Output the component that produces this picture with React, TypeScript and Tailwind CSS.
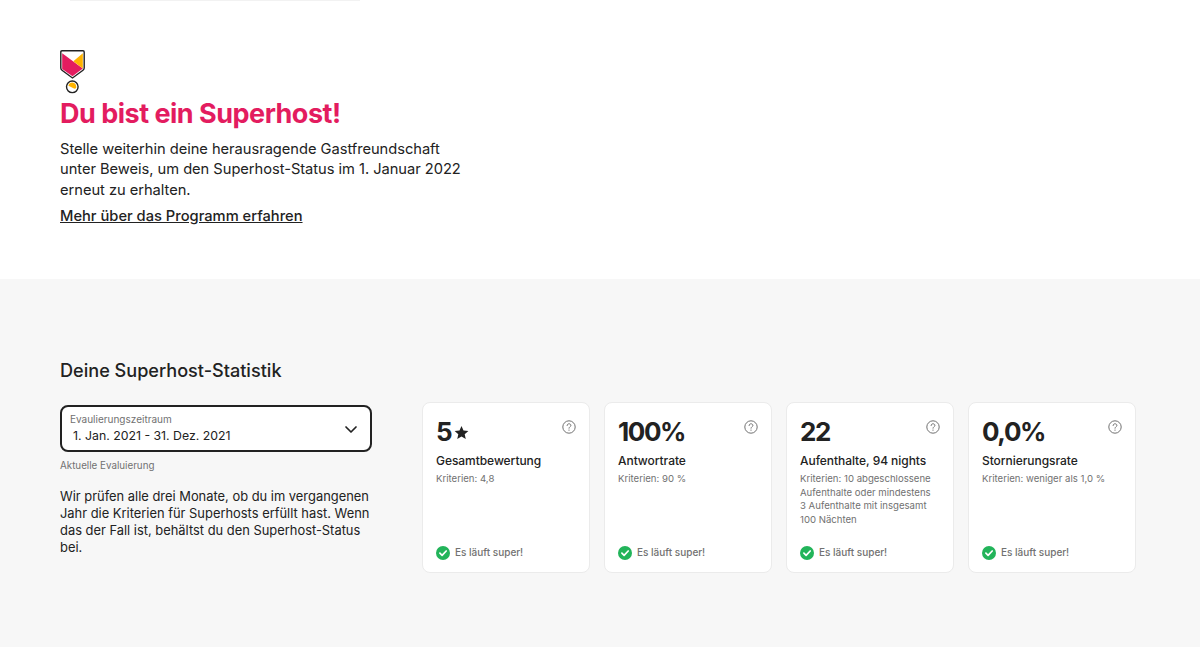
import React from "react";

function Medal() {
  return (
    <svg width="26" height="44" viewBox="0 0 26 44" className="block">
      <path d="M0.8 2 Q0.8 0.8 2 0.8 L23 0.8 Q24.2 0.8 24.2 2 L24.2 18 Q24.2 19.4 23 20.2 L12.5 28 L2 20.2 Q0.8 19.4 0.8 18 Z" fill="#fff" stroke="#222" strokeWidth="1.4" />
      <path d="M2.2 3.2 L22.8 18.4 L12.5 26.3 L2.2 19 Z" fill="#E31C5F" />
      <path d="M22.8 3.2 L13.3 11.2 L22.8 18.4 Z" fill="#FFB400" />
      <circle cx="12.3" cy="36.8" r="5.8" fill="#fff" stroke="#222" strokeWidth="1.4" />
      <path d="M8.4 35.8 Q9.2 32.6 12.3 32.6 Q16.6 33.2 16.3 37.8 Q15 39.3 13.5 38.3 Z" fill="#FFB400" />
    </svg>
  );
}

function Help() {
  return (
    <svg width="14" height="14" viewBox="0 0 14 14" fill="none" className="block">
      <circle cx="7" cy="7" r="6.2" stroke="#717171" strokeWidth="1" />
      <path d="M5.1 5.5 C5.1 4.4 6 3.8 7 3.8 C8 3.8 8.9 4.4 8.9 5.4 C8.9 6.7 7 6.8 7 8.2" stroke="#717171" strokeWidth="1" strokeLinecap="round" />
      <circle cx="7" cy="10.1" r="0.7" fill="#717171" />
    </svg>
  );
}

function Check() {
  return (
    <svg width="14" height="14" viewBox="0 0 14 14" className="block shrink-0">
      <circle cx="7" cy="7" r="7" fill="#22B45A" />
      <path d="M3.9 7.2 L6.1 9.3 L10.2 5" fill="none" stroke="#fff" strokeWidth="1.7" strokeLinecap="round" strokeLinejoin="round" />
    </svg>
  );
}

function Star() {
  return (
    <svg width="15" height="15" viewBox="0 0 24 24" className="block" fill="#222">
      <path d="M12 1.5l3.2 7.2 7.8.8-5.9 5.2 1.7 7.7L12 18.4l-6.8 4 1.7-7.7L1 9.5l7.8-.8z" />
    </svg>
  );
}

function Card({ value, star, title, desc }: { value: string; star?: boolean; title: string; desc: string }) {
  return (
    <div className="w-[168px] h-[171px] bg-white rounded-lg border border-[#ebebeb] px-[13px] pt-[11px] pb-[12px] flex flex-col">
      <div className="flex items-start justify-between">
        <div className="flex items-center gap-[3px] h-[34px] text-[26px] font-bold tracking-[-1.4px] text-[#222]">
          {value}
          {star && <span className="mt-[3px]"><Star /></span>}
        </div>
        <span className="mt-[6px]"><Help /></span>
      </div>
      <div className="mt-[5px] text-[12px] leading-[16px] font-medium tracking-[-0.05px] text-[#222]">{title}</div>
      <div className="mt-[3px] pr-[4px] text-[9.6px] leading-[13.5px] text-[#717171]">{desc}</div>
      <div className="mt-auto flex items-center gap-[5px] text-[10px] font-medium text-[#717171]">
        <Check />
        Es läuft super!
      </div>
    </div>
  );
}

export default function App() {
  return (
    <div className="w-[1200px] h-[647px] overflow-hidden bg-white flex flex-col font-['Inter','Liberation_Sans',sans-serif] text-[#222]">
      <div className="h-[279px] shrink-0 pl-[60px]">
        <div className="ml-[10px] w-[290px] h-px bg-[#f2f2f2]" />
        <div className="pt-[49px]"><Medal /></div>
        <h1 className="mt-[3px] text-[27px] leading-[34px] font-bold tracking-[-0.5px] text-[#E31C5F]">Du bist ein Superhost!</h1>
        <p className="mt-[8px] w-[410px] text-[14.7px] leading-[20.25px] tracking-[-0.04px]">
          Stelle weiterhin deine herausragende Gastfreundschaft unter Beweis, um den Superhost-Status im 1. Januar 2022 erneut zu erhalten.
        </p>
        <a className="block mt-[6px] text-[14.7px] leading-[20px] font-medium underline">Mehr über das Programm erfahren</a>
      </div>
      <div className="flex-1 bg-[#f7f7f7] pl-[60px] pt-[79px]">
        <h2 className="text-[18.1px] leading-[24px] font-medium">Deine Superhost-Statistik</h2>
        <div className="mt-[20px] flex">
          <div className="w-[312px] mt-[3px]">
            <div className="h-[47px] bg-white border-2 border-[#222] rounded-lg pl-[8px] pr-[12px] flex items-center justify-between">
              <div>
                <div className="text-[10px] leading-[13px] text-[#717171]">Evaulierungszeitraum</div>
                <div className="pl-[3px] mt-[1px] text-[12.3px] leading-[17px]">1. Jan. 2021 - 31. Dez. 2021</div>
              </div>
              <svg width="14" height="14" viewBox="0 0 14 14" fill="none" className="block">
                <path d="M2 5 L7 10 L12 5" stroke="#222" strokeWidth="1.7" strokeLinecap="round" strokeLinejoin="round" />
              </svg>
            </div>
            <div className="mt-[7px] text-[9.8px] leading-[13px] text-[#717171]">Aktuelle Evaluierung</div>
            <p className="mt-[16px] text-[12.9px] leading-[17px]">
              Wir prüfen alle drei Monate, ob du im vergangenen Jahr die Kriterien für Superhosts erfüllt hast. Wenn das der Fall ist, behältst du den Superhost-Status bei.
            </p>
          </div>
          <div className="ml-[50px] flex gap-[14px]">
            <Card value="5" star title="Gesamtbewertung" desc="Kriterien: 4,8" />
            <Card value="100%" title="Antwortrate" desc="Kriterien: 90 %" />
            <Card value="22" title="Aufenthalte, 94 nights" desc="Kriterien: 10 abgeschlossene Aufenthalte oder mindestens 3 Aufenthalte mit insgesamt 100 Nächten" />
            <Card value="0,0%" title="Stornierungsrate" desc="Kriterien: weniger als 1,0 %" />
          </div>
        </div>
      </div>
    </div>
  );
}
